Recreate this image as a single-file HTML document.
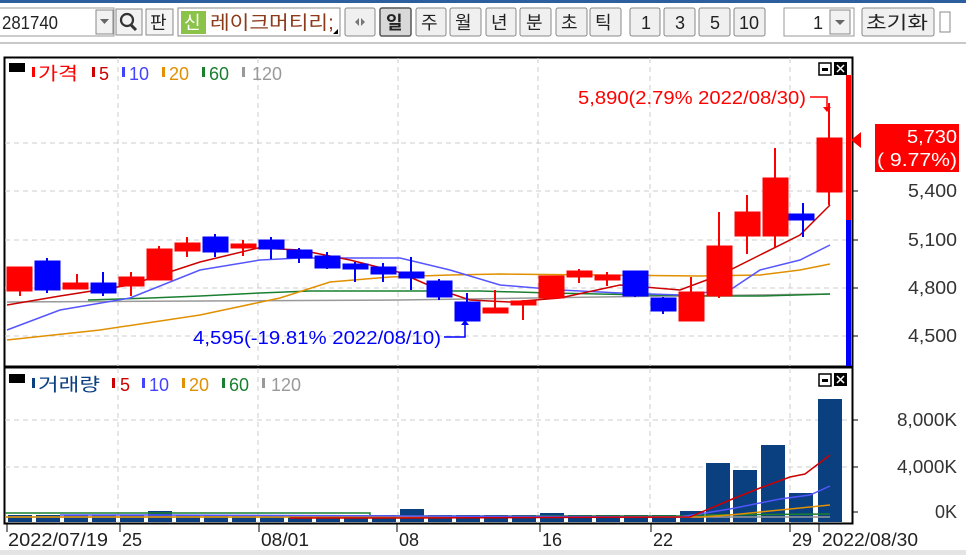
<!DOCTYPE html>
<html><head><meta charset="utf-8"><style>
body{margin:0;width:966px;height:555px;overflow:hidden;background:#fff;font-family:"Liberation Sans","Noto Sans CJK KR",sans-serif}
svg{display:block}
text{font-family:"Liberation Sans","Noto Sans CJK KR",sans-serif}
</style></head><body>
<svg width="966" height="555" viewBox="0 0 966 555" xmlns="http://www.w3.org/2000/svg">
<rect width="966" height="555" fill="#fff"/>
<rect x="0" y="0" width="966" height="3" fill="#2d5f9e"/>
<!-- toolbar -->
<g font-size="18" fill="#222">
<rect x="-2" y="8" width="116" height="28" fill="#fff" stroke="#999"/>
<text x="2" y="29" textLength="56" lengthAdjust="spacingAndGlyphs">281740</text>
<rect x="96" y="10" width="17" height="24" fill="#f2f2f2" stroke="#888"/>
<path d="M100 19 h9 l-4.5 5z" fill="#666"/>
<rect x="116" y="9" width="26" height="26" fill="#f2f2f2" stroke="#888"/>
<circle cx="127" cy="20" r="6" fill="none" stroke="#333" stroke-width="2.2"/><path d="M131 25 l5 5" stroke="#333" stroke-width="3"/>
<rect x="146" y="9" width="27" height="26" fill="#f4f4f4" stroke="#888"/>
<text x="150" y="29">판</text>
<rect x="178" y="8" width="162" height="28" fill="#fff" stroke="#888"/>
<rect x="181" y="11" width="25" height="23" fill="#8bc34a"/>
<text x="184" y="29" fill="#fff">신</text>
<text x="210" y="29" fill="#8b3a1a" font-size="19" textLength="124" lengthAdjust="spacingAndGlyphs">레이크머티리;</text>
<path d="M333 34 l5-5 v5z" fill="#000"/>
<rect x="345" y="8" width="30" height="28" rx="2" fill="#f0f0f0" stroke="#888"/>
<path d="M355 22 l4-4 v8z M365 22 l-4-4 v8z" fill="#777"/>
<rect x="380" y="8" width="31" height="28" rx="2" fill="#d8d8d8" stroke="#555" stroke-width="1.5"/>
<text x="386" y="29" font-weight="bold">일</text>
<g fill="#f0f0f0" stroke="#888">
<rect x="416" y="8" width="30" height="28" rx="2"/><rect x="450" y="8" width="31" height="28" rx="2"/>
<rect x="486" y="8" width="30" height="28" rx="2"/><rect x="520" y="8" width="31" height="28" rx="2"/>
<rect x="556" y="8" width="31" height="28" rx="2"/><rect x="590" y="8" width="31" height="28" rx="2"/>
<rect x="630" y="8" width="30" height="28" rx="2"/><rect x="664" y="8" width="31" height="28" rx="2"/>
<rect x="699" y="8" width="31" height="28" rx="2"/><rect x="734" y="8" width="31" height="28" rx="2"/>
<rect x="862" y="8" width="72" height="28" rx="2"/>
</g>
<text x="421" y="29">주</text><text x="455" y="29">월</text><text x="491" y="29">년</text><text x="526" y="29">분</text>
<text x="561" y="29">초</text><text x="595" y="29">틱</text>
<text x="641" y="29">1</text><text x="675" y="29">3</text><text x="710" y="29">5</text><text x="739" y="29">10</text>
<rect x="784" y="8" width="70" height="28" fill="#fff" stroke="#999"/>
<text x="813" y="29">1</text>
<rect x="830" y="10" width="20" height="24" fill="#f2f2f2" stroke="#888"/>
<path d="M835 20 h10 l-5 5z" fill="#666"/>
<text x="866" y="29" textLength="62" lengthAdjust="spacingAndGlyphs">초기화</text>
<rect x="940" y="12" width="10" height="20" fill="#fff" stroke="#888"/>
</g>
<rect x="0" y="42" width="966" height="2" fill="#c8c8c8"/>
<!-- chart frame -->
<rect x="4.5" y="57.5" width="848" height="309" fill="#fff" stroke="#000" stroke-width="2"/>
<rect x="4.5" y="367.5" width="848" height="156" fill="#fff" stroke="#000" stroke-width="2"/>
<!-- grid -->
<g stroke="#ccc" stroke-dasharray="5,4" stroke-width="1">
<path d="M118 58V366M258 58V366M398 58V366M538 58V366M650 58V366M790 58V366"/>
<path d="M5 143H848M5 191H848M5 240H848M5 288H848M5 336H848"/>
<path d="M118 368V523M258 368V523M398 368V523M538 368V523M650 368V523M790 368V523"/>
<path d="M5 420H848M5 467H848"/>
</g>
<!-- right price bar -->
<rect x="846" y="75" width="5" height="145" fill="#f00"/>
<rect x="846" y="220" width="5" height="146" fill="#00f"/>
<path d="M851 140 l10 -8 v16z" fill="#f00"/>
<g stroke="#000"><path d="M852 191h6M852 240h6M852 288h6M852 336h6M852 420h6M852 467h6M852 512h6"/></g>
<rect x="875" y="124" width="84" height="48" fill="#f00"/>
<g font-size="18" fill="#fff" text-anchor="end"><text x="957" y="143" textLength="50" lengthAdjust="spacingAndGlyphs">5,730</text><text x="957" y="166" textLength="80" lengthAdjust="spacingAndGlyphs">( 9.77%)</text></g>
<g font-size="18" fill="#333" text-anchor="end">
<text x="957" y="197" textLength="49" lengthAdjust="spacingAndGlyphs">5,400</text><text x="957" y="246" textLength="49" lengthAdjust="spacingAndGlyphs">5,100</text><text x="957" y="294" textLength="49" lengthAdjust="spacingAndGlyphs">4,800</text><text x="957" y="342" textLength="49" lengthAdjust="spacingAndGlyphs">4,500</text>
<text x="957" y="426" textLength="60" lengthAdjust="spacingAndGlyphs">8,000K</text><text x="957" y="473" textLength="60" lengthAdjust="spacingAndGlyphs">4,000K</text><text x="957" y="518">0K</text>
</g>
<!-- legend -->
<rect x="9" y="63" width="16" height="9" fill="#000"/>
<g font-size="18">
<rect x="32" y="67" width="3" height="10" fill="#f00"/><text x="38" y="80" fill="#f00" textLength="40" lengthAdjust="spacingAndGlyphs">가격</text>
<rect x="92" y="67" width="3" height="10" fill="#c00"/><text x="99" y="80" fill="#c00">5</text>
<rect x="122" y="67" width="3" height="10" fill="#44f"/><text x="129" y="80" fill="#44f">10</text>
<rect x="162" y="67" width="3" height="10" fill="#e09000"/><text x="169" y="80" fill="#e09000">20</text>
<rect x="202" y="67" width="3" height="10" fill="#1a8030"/><text x="209" y="80" fill="#1a8030">60</text>
<rect x="242" y="67" width="3" height="10" fill="#999"/><text x="252" y="80" fill="#999">120</text>
</g>
<rect x="9" y="374" width="16" height="9" fill="#000"/>
<g font-size="18">
<rect x="32" y="378" width="3" height="10" fill="#0a3f80"/><text x="38" y="391" fill="#0a3f80" textLength="62" lengthAdjust="spacingAndGlyphs">거래량</text>
<rect x="112" y="378" width="3" height="10" fill="#c00"/><text x="120" y="391" fill="#c00">5</text>
<rect x="142" y="378" width="3" height="10" fill="#44f"/><text x="149" y="391" fill="#44f">10</text>
<rect x="182" y="378" width="3" height="10" fill="#e09000"/><text x="189" y="391" fill="#e09000">20</text>
<rect x="222" y="378" width="3" height="10" fill="#1a8030"/><text x="229" y="391" fill="#1a8030">60</text>
<rect x="262" y="378" width="3" height="10" fill="#999"/><text x="271" y="391" fill="#999">120</text>
</g>
<!-- panel icons -->
<g><rect x="819" y="63" width="12" height="12" fill="#fff" stroke="#000" stroke-width="1.5"/><rect x="822" y="68" width="6" height="3" fill="#000"/>
<rect x="834" y="62" width="13" height="13" fill="#000"/><path d="M837 65l7 7M844 65l-7 7" stroke="#fff" stroke-width="1.5"/>
<rect x="819" y="374" width="12" height="12" fill="#fff" stroke="#000" stroke-width="1.5"/><rect x="822" y="379" width="6" height="3" fill="#000"/>
<rect x="834" y="373" width="13" height="13" fill="#000"/><path d="M837 376l7 7M844 376l-7 7" stroke="#fff" stroke-width="1.5"/></g>
<!-- MA lines -->
<g fill="none" stroke-width="1.5">
<polyline stroke="#999" points="7,302 400,300 600,297 830,294"/>
<polyline stroke="#1a8030" points="88,300 150,298 200,296 260,293 310,291 400,291 480,291 550,293 650,295 700,296 760,296 830,294"/>
<polyline stroke="#e09000" points="7,340 100,330 200,315 280,298 330,282 390,277 450,275 500,274 700,276 760,275 800,270 830,264"/>
<polyline stroke="#55f" points="7,330 60,310 130,298 200,270 260,260 300,258 400,258 450,270 500,285 560,290 620,293 680,295 730,290 760,270 800,260 830,245"/>
<polyline stroke="#c00" points="7,305 60,296 130,285 200,262 258,248 300,250 350,260 398,272 440,290 470,300 510,302 560,298 620,285 680,290 720,275 760,255 800,235 830,205"/>
</g>
<!-- candles -->
<g>
<g fill="#f00" stroke="#f00">
<path d="M20 267V296M77 274V289M131 272V296M159 246V280M187 237V257M243 240V256M495 290V313M523 300V320M551 276V299M579 269V283M607 272V286M691 277V321M719 212V298M747 195V254M775 148V247M829 103V205" stroke-width="2"/>
<rect x="7" y="267" width="25" height="24"/><rect x="63" y="283" width="25" height="6"/><rect x="119" y="277" width="25" height="9"/>
<rect x="147" y="249" width="25" height="31"/><rect x="175" y="243" width="25" height="8"/><rect x="231" y="244" width="25" height="4"/>
<rect x="483" y="308" width="25" height="5"/><rect x="511" y="301" width="25" height="4"/><rect x="539" y="276" width="25" height="22"/>
<rect x="567" y="271" width="25" height="6"/><rect x="595" y="275" width="25" height="5"/><rect x="679" y="292" width="25" height="29"/>
<rect x="707" y="246" width="25" height="50"/><rect x="735" y="212" width="25" height="24"/><rect x="763" y="178" width="25" height="58"/>
<rect x="817" y="138" width="25" height="54"/>
</g>
<g fill="#00f" stroke="#00f">
<path d="M47 258V293M103 272V296M215 234V257M271 237V259M299 248V263M327 252V269M355 262V282M383 263V282M411 257V290M439 279V300M467 293V321M635 271V297M663 297V314M803 203V237" stroke-width="2"/>
<rect x="35" y="261" width="25" height="29"/><rect x="91" y="283" width="25" height="10"/><rect x="203" y="237" width="25" height="15"/>
<rect x="259" y="240" width="25" height="9"/><rect x="287" y="250" width="25" height="8"/><rect x="315" y="256" width="25" height="12"/>
<rect x="343" y="264" width="25" height="5"/><rect x="371" y="267" width="25" height="7"/><rect x="399" y="272" width="25" height="6"/>
<rect x="427" y="281" width="25" height="16"/><rect x="455" y="302" width="25" height="19"/><rect x="623" y="271" width="25" height="25"/>
<rect x="651" y="298" width="25" height="13"/><rect x="789" y="214" width="25" height="6"/>
</g>
</g>
<!-- annotations -->
<text x="578" y="104" font-size="18" fill="#f00" textLength="228" lengthAdjust="spacingAndGlyphs">5,890(2.79% 2022/08/30)</text>
<path d="M810 97h17v12" stroke="#f00" fill="none" stroke-width="1.5"/><path d="M823 107h8l-4 5z" fill="#f00"/>
<text x="193" y="344" font-size="18" fill="#00f" textLength="248" lengthAdjust="spacingAndGlyphs">4,595(-19.81% 2022/08/10)</text>
<path d="M444 337h21v-14" stroke="#00f" fill="none" stroke-width="1.5"/><path d="M461 325h8l-4-5z" fill="#00f"/>
<!-- volume bars -->
<g fill="#0a3f80">
<rect x="8" y="515" width="24" height="7"/><rect x="36" y="515" width="24" height="7"/><rect x="64" y="515" width="24" height="7"/>
<rect x="92" y="515" width="24" height="7"/><rect x="120" y="515" width="24" height="7"/><rect x="148" y="511" width="24" height="11"/>
<rect x="176" y="515" width="24" height="7"/><rect x="204" y="515" width="24" height="7"/><rect x="232" y="515" width="24" height="7"/>
<rect x="260" y="515" width="24" height="7"/><rect x="288" y="515" width="24" height="7"/><rect x="316" y="515" width="24" height="7"/>
<rect x="344" y="515" width="24" height="7"/><rect x="372" y="515" width="24" height="7"/><rect x="400" y="509" width="24" height="13"/>
<rect x="428" y="515" width="24" height="7"/><rect x="456" y="515" width="24" height="7"/><rect x="484" y="515" width="24" height="7"/>
<rect x="512" y="515" width="24" height="7"/><rect x="540" y="513" width="24" height="9"/><rect x="568" y="515" width="24" height="7"/>
<rect x="596" y="515" width="24" height="7"/><rect x="624" y="515" width="24" height="7"/><rect x="652" y="515" width="24" height="7"/>
<rect x="680" y="511" width="24" height="11"/><rect x="706" y="463" width="24" height="59"/><rect x="733" y="470" width="24" height="52"/>
<rect x="761" y="445" width="24" height="77"/><rect x="789" y="493" width="24" height="29"/><rect x="818" y="399" width="24" height="123"/>
</g>
<g fill="none" stroke-width="1.5">
<polyline stroke="#1a8030" points="5,513 370,513 370,516 680,516 700,515 830,514"/>
<polyline stroke="#999" points="5,517 830,517"/>
<polyline stroke="#e09000" points="5,517 700,517 730,515 780,510 830,505"/>
<polyline stroke="#55f" points="60,515 145,515 680,517 730,509 780,499 810,495 830,486"/>
<polyline stroke="#c00" points="290,518 400,518 690,517 730,500 760,488 790,477 805,474 830,455"/>
</g>
<!-- date axis -->
<g stroke="#000"><path d="M7 524v8M120 524v8M259 524v8M397 524v8M540 524v8M651 524v8M790 524v8M819 524v8"/></g>
<g font-size="18" fill="#222">
<text x="8" y="546" textLength="100" lengthAdjust="spacingAndGlyphs">2022/07/19</text><text x="122" y="546">25</text><text x="261" y="546" textLength="48" lengthAdjust="spacingAndGlyphs">08/01</text>
<text x="399" y="546">08</text><text x="542" y="546">16</text><text x="653" y="546">22</text>
<text x="792" y="546">29</text><text x="822" y="546" textLength="96" lengthAdjust="spacingAndGlyphs">2022/08/30</text>
</g>
<rect x="0" y="550" width="966" height="5" fill="#e4e4e4"/>
</svg>
</body></html>
